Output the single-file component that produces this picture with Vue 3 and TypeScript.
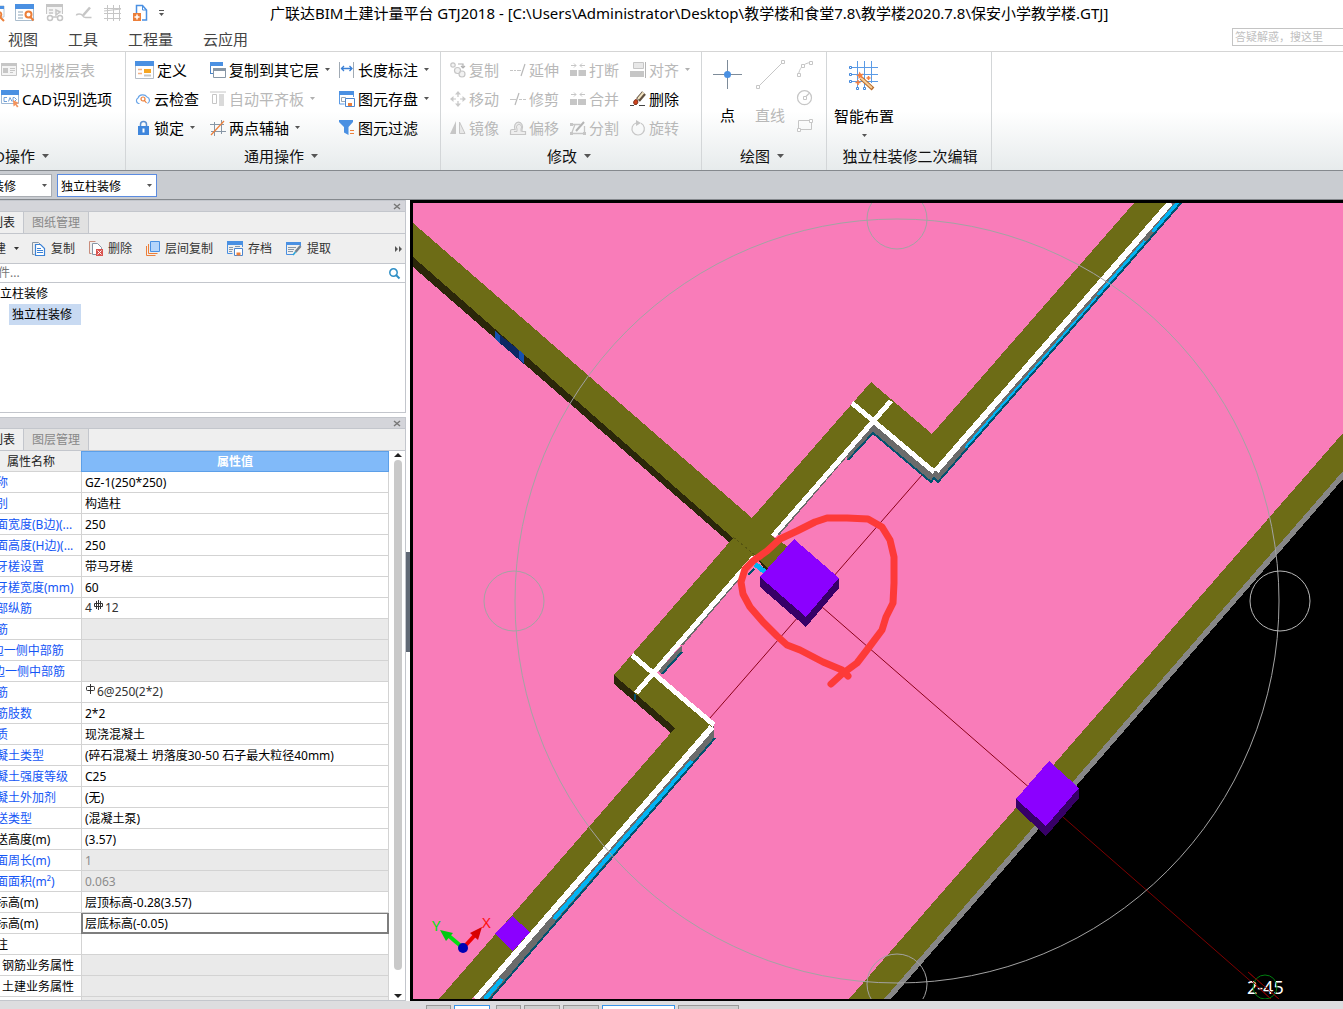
<script setup lang="ts">
import { h, ref, type FunctionalComponent } from 'vue'

// [path, fill, stroke, stroke width]
type Shape = [string, string, string?, number?]
interface Drawing { w: number; h: number; shapes: Shape[] }

const N = 'none'
const G = '#c6c6c6'
const B = '#4a90e2'
const S = '#8796a5'
const O = '#ec7f3a'

const drawings: Record<string, Drawing> = {
  caret: { w: 5, h: 3, shapes: [['M0 0h5l-2.5 3z', 'currentColor']] },
  caretWide: { w: 7, h: 4, shapes: [['M0 0h7L3.5 4z', 'currentColor']] },
  moreDown: { w: 5, h: 6, shapes: [['M0 0h5v1H0z', '#555'], ['M0 3h5L2.5 6z', '#555']] },
  close: { w: 6, h: 5, shapes: [['M0 0l6 5M6 0L0 5', N, '#777', 1.5]] },
  chevrons: { w: 8, h: 6, shapes: [['M0 0l3 3-3 3zM4 0l3 3-3 3z', '#555']] },
  search: { w: 11, h: 11, shapes: [['M4.500 .8a3.700 3.700 0 1 1 0 7.400a3.700 3.700 0 0 1 0-7.400z', N, '#2f8fc6', 1.5], ['M7 7l3.500 3.500', N, '#2f8fc6', 2]] },
  quickEdge: { w: 5, h: 18, shapes: [['M0 2h4v11H0', N, '#b9c6d2', 1], ['M0 2h4v3H0z', B], ['M0 13l4 4M0 8a3 3 0 0 1 0 5', N, O, 2]] },
  quickSearch: { w: 19, h: 18, shapes: [['M.5 1.500h18v15h-18z', '#fff', '#a9bccd', 1], ['M0 0h19v5H0z', B], ['M3 8h5M3 11h5M3 14h5', N, '#b4c3d0', 1.5], ['M13.500 7.500a3 3 0 1 1 0 6a3 3 0 0 1 0-6zM15.500 13l3 3.500', '#fff', O, 2]] },
  quickGlasses: { w: 18, h: 18, shapes: [['M.5 10V.5h16V10', '#f5f5f5', G, 1], ['M0 0h17v3H0z', G], ['M3 6h4M3 9h4M10 6l4 2-4 3z', N, G, 1.500], ['M4 11.500a2.500 2.500 0 1 1 0 5a2.500 2.500 0 0 1 0-5zM14 11.500a2.500 2.500 0 1 1 0 5a2.500 2.500 0 0 1 0-5zM6.500 13h5', '#fff', G, 1.500]] },
  quickPen: { w: 16, h: 12, shapes: [['M.5 8.500c0-2 5-2 6 0s2 2 3 2h6', N, G, 1.500], ['M14 .5L7 8.500', N, G, 2.500]] },
  quickGrid: { w: 17, h: 16, shapes: [['M3.500 0v16M9.500 0v16M15.500 0v16M0 3.500h17M0 8.500h17M0 13.500h17M0 6l17-2', N, G, 1]] },
  quickNew: { w: 14, h: 16, shapes: [['M3.500 8V.5h6L13.500 5v10H9', '#fff', B, 1.500], ['M9.500 1v4H13', N, B, 1], ['M0 8h8v8H0z', O], ['M4 9.500v5M1.500 12h5', N, '#fff', 1.500]] },
  floorSheet: { w: 16, h: 16, shapes: [['M.5 2.500h15v11H.5z', '#f4f4f4', G, 1], ['M0 1h16v3H0z', G], ['M2 6h5v5H2z', G], ['M9 6.500h5M9 8.500h5M9 10.500h3', N, G, 1]] },
  cad: { w: 18, h: 18, shapes: [['M.5 1.500h17v12H.5z', '#fff', '#9db7d4', 1], ['M0 0h18v5H0z', B], ['M6 7.500H3v4h3M7.500 11.500l1.500-4 2 4M12 7.500v4h1.500l2-2-2-2z', N, '#6f9fd8', 1], ['M12 10l6 3-2.500 1 2 2.500-1.500 1-1.500-2.500-2 1.500z', '#f3935c']] },
  define: { w: 19, h: 18, shapes: [['M.5.5h18v17H.5z', '#fff', '#b5bdc6', 1], ['M0 0h19v5H0z', B], ['M9 8h7v4H9z', '#f6a623'], ['M3 8.500h4M3 12.500h4', N, '#f4b183', 1.500], ['M9 14.500h7', N, G, 2]] },
  cloud: { w: 16, h: 12, shapes: [['M4.500 10.500H3.500a3 3 0 0 1-.5-5.500A5 4.500 0 0 1 12 4a3.500 3.500 0 0 1 .5 6.500', N, '#6aa5e8', 1.200], ['M8 4a2 2 0 1 1 0 4a2 2 0 0 1 0-4zM9.500 7.500l2 2.500', N, O, 1.200]] },
  lock: { w: 11, h: 14, shapes: [['M2.500 7V3.500a3 3 0 0 1 6 0V7', N, '#5b8fd0', 1.500], ['M0 5h11v9H0z', '#3f86dc'], ['M4.500 7.500h2v4h-2z', '#fff']] },
  copyFloor: { w: 16, h: 16, shapes: [['M.5 11.500V1.500h12V4', '#fff', '#4a84c8', 1], ['M0 0h13v4H0z', B], ['M3.500 6.500h12v9h-12z', '#fff', S, 1], ['M3 6h13v3H3z', S], ['M0 11.500h3', N, '#4a84c8', 1]] },
  alignSlab: { w: 16, h: 16, shapes: [['M0 1h16', N, G, 1], ['M2.500 3.500h4v9h-4z', '#fff', G, 1], ['M9 3h5v12H9z', '#dadada']] },
  auxAxis: { w: 16, h: 16, shapes: [['M4.500 2v14M11.500 0v14M0 4.500h14M1 11.500h15', N, S, 1], ['M1 15L14 1', N, O, 1.200]] },
  length: { w: 16, h: 16, shapes: [['M.5 0v16M14.500 0v16', N, '#a0aab4', 1], ['M2 6.500h11M5 4L2.500 6.500 5 9M10.500 4L13 6.500 10.500 9', N, '#3a7fd5', 1.300]] },
  store: { w: 16, h: 16, shapes: [['M.5 1v12h5M14.500 1v5', N, '#5b9be6', 1], ['M0 0h15v4H0z', B], ['M2.500 6.500h4v4h-4z', N, '#9aa7b3', 1], ['M6.500 7.500h9v8h-9z', '#fff', '#4c86cf', 1], ['M9 12h4v3H9z', O]] },
  filter: { w: 16, h: 16, shapes: [['M0 0h14v2L9.500 7v8L5 12.500V7L0 2z', '#4a90e2'], ['M11 10.500h4M11 13.500h4', N, O, 1]] },
  copy: { w: 16, h: 16, shapes: [['M3 .8a2.200 2.200 0 1 1 0 4.400a2.200 2.200 0 0 1 0-4.400zM7.500 5.500a3 3 0 1 1 0 6a3 3 0 0 1 0-6zM12 9a3 3 0 1 1 0 6a3 3 0 0 1 0-6z', '#f2f2f2', G, 1.200], ['M8 2h5v4M11 4l2 2 2-2', N, '#b0b0b0', 1.200]] },
  extend: { w: 16, h: 12, shapes: [['M0 6.500h3M4 6.500h2M7 6.500h4', N, G, 1], ['M15 0l-4 12', N, '#b8b8b8', 1.200]] },
  breakUp: { w: 16, h: 13, shapes: [['M0 7h7v6H0zM8.500 7H16v6H8.500z', G], ['M1 2.500h5M4 .5l2 2-2 2M15 2.500h-5M12 .5l-2 2 2 2', N, G, 1]] },
  merge: { w: 16, h: 13, shapes: [['M0 7h7v6H0zM8 7h8v6H8z', G], ['M1 2.500h5M4 .5l2 2-2 2M15 2.500h-5M12 .5l-2 2 2 2', N, G, 1]] },
  align: { w: 16, h: 16, shapes: [['M3.500.5h10v6h-10z', '#e8e8e8', G, 1], ['M0 9h14v6H0z', G], ['M15.500 0v16', N, '#b5b5b5', 1]] },
  move: { w: 16, h: 16, shapes: [['M8 2v12M2 8h12', N, G, 1.200], ['M5 3.500L8 0l3 3.500zM5 12.500L8 16l3-3.500zM3.500 5L0 8l3.500 3zM12.500 5L16 8l-3.500 3z', '#c9c9c9'], ['M6 6h4v4H6z', '#fff']] },
  trim: { w: 16, h: 12, shapes: [['M0 6.500h6M9 6.500h3M13 6.500h3', N, G, 1], ['M9 0L5 12', N, '#b8b8b8', 1.200]] },
  erase: { w: 16, h: 16, shapes: [['M0 14.500h4M9 14.500h6', N, '#444', 1], ['M14 2L8 9', N, '#5f4f3e', 5], ['M13.500 1.500L8 8', N, '#f2e3c2', 2], ['M6 8.500a2.500 2.500 0 1 1-1.500 5a3 3 0 0 1 1.500-5z', '#d0431c', '#7a2d18', 1]] },
  mirror: { w: 16, h: 16, shapes: [['M6 1v13H0z', G], ['M9.500 2v11.500H15z', '#e8e8e8', G, 1]] },
  offset: { w: 16, h: 16, shapes: [['M.5 14.500h15v-3h-3.500V9.500a4 5 0 1 0-7 0H2a1.500 1.500 0 0 0-1.500 1.500z', '#eee', G, 1.200], ['M4 11.500h3V9a2.500 3 0 1 1 4 0v2.500', N, G, 1]] },
  split: { w: 16, h: 14, shapes: [['M1.500 3.500h9M14.500 5v7.500h-13L5 3.500', N, G, 1.300], ['M0 2h3v3H0zM0 11h3v3H0zM13 11h3v3h-3z', G], ['M14 1L6 10', N, '#b5b5b5', 2]] },
  rotate: { w: 16, h: 16, shapes: [['M6 3A6.200 6.200 0 1 0 11 3.300', N, G, 1.200], ['M6 0l5 3-5 3z', G]] },
  point: { w: 29, h: 29, shapes: [['M14.500 0v29M0 14.500h29', N, '#7d8b99', 1], ['M14.500 11a3.500 3.500 0 1 1 0 7a3.500 3.500 0 0 1 0-7z', B]] },
  line: { w: 29, h: 29, shapes: [['M2 27L27 2', N, G, 1], ['M.5 25.500h3v3h-3zM25.500.5h3v3h-3z', '#fff', G, 1]] },
  arc: { w: 16, h: 16, shapes: [['M1.500 14C2 8 6 2 14 1.500', N, G, 1], ['M.5 12.500h3v3h-3zM4.500 3.500h3v3h-3zM12.500.5h3v3h-3z', '#fff', G, 1]] },
  circle: { w: 16, h: 16, shapes: [['M7.500.7a7 7 0 1 1 0 14a7 7 0 0 1 0-14zM8 7.500l4-4', N, G, 1.200], ['M6.500 6.500h3v3h-3z', '#fff', G, 1]] },
  rect: { w: 16, h: 13, shapes: [['M1.500 1.500h13v9h-13z', N, G, 1], ['M.5 9.500h3v3h-3zM12.500.5h3v3h-3z', '#fff', G, 1]] },
  smart: { w: 30, h: 30, shapes: [['M8.500 0v26M15.500 0v26M22.500 0v22M2 6.500h27M2 13.500h27M2 20.500h27', N, '#5b9be6', 1], ['M.5 5.500h2v2h-2zM.5 12.500h2v2h-2zM.5 19.500h2v2h-2zM7.500 26.500h2v2h-2zM14.500 26.500h2v2h-2z', '#fff', '#3f86dc', 1], ['M12 17l12 11', N, '#b86b2a', 4], ['M12 17l11 10', N, '#f7cf9b', 2], ['M10.500 10.500l1.500 2.500 2.500-.5-1.500 2.500 1 2.500-2.500-1-2 1.500v-2.500L7 14l2.500-.5z', '#f5803e'], ['M9 19v5M6.500 21.500h5M19.500 15v4M17.500 17h4', N, '#f5803e', 1.500]] },
  panelCopy: { w: 14, h: 14, shapes: [['M2.500 12.500h-2V.5h6l3 3', N, S, 1], ['M3.500 2.500h5l4 4v7h-9z', '#fff', '#3b82d6', 1.200], ['M5 6.500h4M5 8.500h6M5 10.500h6', N, '#3b82d6', 1]] },
  panelDelete: { w: 14, h: 15, shapes: [['M2.500 12.500h-2V.5h6', N, '#c98d7c', 1], ['M7 13.500H3.500v-11h5l4 4V8', '#fff', S, 1], ['M7 8h7v7H7z', '#d9534f'], ['M8.500 9.500l4 4M12.500 9.500l-4 4', N, '#fff', 1]] },
  panelFloors: { w: 14, h: 15, shapes: [['M.5 5v9.500h9', N, O, 1], ['M2.500 3v9.500h9', N, O, 1], ['M4.500.5h9v10h-9z', '#b5d5fb', '#4a90e2', 1]] },
  panelSave: { w: 16, h: 16, shapes: [['M.5 1v11.500h5M15.500 1v5', N, '#4a90e2', 1], ['M0 0h16v4H0z', B], ['M2 6.500h4M2 8.500h4M2 10.500h3M8 5.500h5', N, S, 1], ['M7.500 7.500h8v7h-8z', '#fff', '#4c86cf', 1], ['M9.500 11.500h4v3h-4z', O]] },
  panelExtract: { w: 16, h: 14, shapes: [['M.5 1v11.500h7M14.500 1v3', N, '#4a90e2', 1], ['M0 0h15v3H0z', B], ['M2 5.500h8M2 7.500h6M2 9.500h5', N, S, 1], ['M14.500 4L9.500 10', N, '#75828e', 2.500], ['M9.500 10L7 13', N, '#27a5d8', 1.500]] },
  barThree: { w: 11, h: 10, shapes: [['M5.500 0v10M3.500 1v8M7.500 1v8', N, '#333', 1], ['M1.500 3.500h8v3h-8z', N, '#333', 1]] },
  barOne: { w: 11, h: 10, shapes: [['M5.500 0v10', N, '#333', 1], ['M1.500 3.500a1 1 0 0 1 1-1h6a1 1 0 0 1 1 1v2a1 1 0 0 1-1 1h-6a1 1 0 0 1-1-1z', N, '#333', 1]] },
}

const Glyph: FunctionalComponent<{ name: string }> = (props) => {
  const g = drawings[props.name]
  return h(
    'svg',
    { width: g.w, height: g.h, viewBox: `0 0 ${g.w} ${g.h}`, 'aria-hidden': 'true', style: 'flex:none;display:block;overflow:visible' },
    g.shapes.map(([d, fill, stroke, width]) => h('path', { d, fill, stroke: stroke ?? N, 'stroke-width': width ?? 0 })),
  )
}
Glyph.props = ['name']

interface Command { icon: string; text: string; off?: boolean; menu?: boolean }

const quick = ['quickEdge', 'quickSearch', 'quickGlasses', 'quickPen', 'quickGrid', 'quickNew', 'moreDown']
const menus = ['视图', '工具', '工程量', '云应用']

const cadCommands: Command[] = [
  { icon: 'floorSheet', text: '识别楼层表', off: true },
  { icon: 'cad', text: 'CAD识别选项' },
]
const commonCommands: Command[] = [
  { icon: 'define', text: '定义' },
  { icon: 'copyFloor', text: '复制到其它层', menu: true },
  { icon: 'length', text: '长度标注', menu: true },
  { icon: 'cloud', text: '云检查' },
  { icon: 'alignSlab', text: '自动平齐板', off: true, menu: true },
  { icon: 'store', text: '图元存盘', menu: true },
  { icon: 'lock', text: '锁定', menu: true },
  { icon: 'auxAxis', text: '两点辅轴', menu: true },
  { icon: 'filter', text: '图元过滤' },
]
const editCommands: Command[] = [
  { icon: 'copy', text: '复制', off: true },
  { icon: 'extend', text: '延伸', off: true },
  { icon: 'breakUp', text: '打断', off: true },
  { icon: 'align', text: '对齐', off: true, menu: true },
  { icon: 'move', text: '移动', off: true },
  { icon: 'trim', text: '修剪', off: true },
  { icon: 'merge', text: '合并', off: true },
  { icon: 'erase', text: '删除' },
  { icon: 'mirror', text: '镜像', off: true },
  { icon: 'offset', text: '偏移', off: true },
  { icon: 'split', text: '分割', off: true },
  { icon: 'rotate', text: '旋转', off: true },
]
const commandBlocks = [
  { key: 'recognise', label: 'CAD操作', commands: cadCommands },
  { key: 'common', label: '通用操作', commands: commonCommands },
  { key: 'edit', label: '修改', commands: editCommands },
]

const panelTools = [
  { icon: 'panelCopy', text: '复制' },
  { icon: 'panelDelete', text: '删除' },
  { icon: 'panelFloors', text: '层间复制' },
  { icon: 'panelSave', text: '存档' },
  { icon: 'panelExtract', text: '提取' },
]

interface Property { name: string; value?: string; pre?: string; bar?: string; tone?: string; locked?: boolean; active?: boolean }

const properties: Property[] = [
  { name: '名称', value: 'GZ-1(250*250)' },
  { name: '类别', value: '构造柱' },
  { name: '截面宽度(B边)(...', value: '250' },
  { name: '截面高度(H边)(...', value: '250' },
  { name: '马牙槎设置', value: '带马牙槎' },
  { name: '马牙槎宽度(mm)', value: '60' },
  { name: '全部纵筋', pre: '4', bar: 'barThree', value: '12' },
  { name: '角筋', locked: true },
  { name: 'B边一侧中部筋', locked: true },
  { name: 'H边一侧中部筋', locked: true },
  { name: '箍筋', bar: 'barOne', value: '6@250(2*2)' },
  { name: '箍筋肢数', value: '2*2' },
  { name: '材质', value: '现浇混凝土' },
  { name: '混凝土类型', value: '(碎石混凝土 坍落度30-50 石子最大粒径40mm)' },
  { name: '混凝土强度等级', value: 'C25' },
  { name: '混凝土外加剂', value: '(无)' },
  { name: '泵送类型', value: '(混凝土泵)' },
  { name: '泵送高度(m)', value: '(3.57)', tone: 'plain' },
  { name: '截面周长(m)', value: '1', locked: true },
  { name: '截面面积(m²)', value: '0.063', locked: true },
  { name: '顶标高(m)', value: '层顶标高-0.28(3.57)', tone: 'plain' },
  { name: '底标高(m)', value: '层底标高(-0.05)', tone: 'plain', active: true },
  { name: '备注', tone: 'plain' },
  { name: '钢筋业务属性', tone: 'plain branch', locked: true },
  { name: '土建业务属性', tone: 'plain branch', locked: true },
  { name: '', tone: 'plain', locked: true },
]

const category = ref('装修')
const element = ref('独立柱装修')
const keyword = ref('')
const help = ref('')
</script>

<template>
  <div class="app">
    <header class="top">
      <div class="title-row">
        <div class="quick">
          <button v-for="q in quick" :key="q" type="button" :aria-label="q"><Glyph :name="q" /></button>
        </div>
        <h1>广联达BIM土建计量平台 GTJ2018 - [C:\Users\Administrator\Desktop\教学楼和食堂7.8\教学楼2020.7.8\保安小学教学楼.GTJ]</h1>
      </div>
      <div class="menu-row">
        <nav>
          <button v-for="m in menus" :key="m" type="button">{{ m }}</button>
        </nav>
        <input v-model="help" class="help" type="text" placeholder="答疑解惑，搜这里" aria-label="答疑解惑" />
      </div>
    </header>

    <div class="ribbon">
      <section v-for="b in commandBlocks" :key="b.key" :class="['block', b.key]">
        <div class="commands">
          <button v-for="c in b.commands" :key="c.text" type="button" class="command" :disabled="c.off">
            <span class="slot"><Glyph :name="c.icon" /></span>
            <span>{{ c.text }}</span>
            <Glyph v-if="c.menu" name="caret" class="drop" />
          </button>
        </div>
        <button type="button" class="block-label">{{ b.label }}<Glyph name="caretWide" /></button>
      </section>
      <section class="block draw">
        <div class="large-row">
          <button type="button" class="large"><Glyph name="point" /><span>点</span></button>
          <button type="button" class="large" disabled><Glyph name="line" /><span>直线</span></button>
          <div class="shapes">
            <button type="button" disabled aria-label="弧"><Glyph name="arc" /></button>
            <button type="button" disabled aria-label="圆"><Glyph name="circle" /></button>
            <button type="button" disabled aria-label="矩形"><Glyph name="rect" /></button>
          </div>
        </div>
        <button type="button" class="block-label">绘图<Glyph name="caretWide" /></button>
      </section>
      <section class="block second">
        <div class="large-row">
          <button type="button" class="large"><Glyph name="smart" /><span>智能布置</span><Glyph name="caret" /></button>
        </div>
        <div class="block-label">独立柱装修二次编辑</div>
      </section>
    </div>

    <div class="filters">
      <label class="pick">
        <select v-model="category" aria-label="构件分类"><option>装修</option></select>
        <Glyph name="caret" />
      </label>
      <label class="pick focused">
        <select v-model="element" aria-label="构件类型"><option>独立柱装修</option></select>
        <Glyph name="caret" />
      </label>
    </div>

    <main class="work">
      <aside class="dock">
        <section class="panel">
          <div class="panel-title"><button type="button" aria-label="关闭"><Glyph name="close" /></button></div>
          <div class="tabs">
            <button type="button" class="on">构件列表</button>
            <button type="button">图纸管理</button>
          </div>
          <div class="tools">
            <button type="button" class="create">新建<Glyph name="caret" /></button>
            <button v-for="t in panelTools" :key="t.text" type="button"><Glyph :name="t.icon" />{{ t.text }}</button>
            <button type="button" class="more" aria-label="更多"><Glyph name="chevrons" /></button>
          </div>
          <label class="find">
            <input v-model="keyword" type="text" placeholder="搜索构件..." aria-label="搜索构件" />
            <Glyph name="search" />
          </label>
          <ul class="tree">
            <li>独立柱装修</li>
            <li class="child"><span>独立柱装修</span></li>
          </ul>
        </section>

        <section class="panel grow">
          <div class="panel-title"><button type="button" aria-label="关闭"><Glyph name="close" /></button></div>
          <div class="tabs">
            <button type="button" class="on">属性列表</button>
            <button type="button">图层管理</button>
          </div>
          <div class="sheet">
            <table>
              <thead><tr><th class="key">属性名称</th><th class="val">属性值</th></tr></thead>
              <tbody>
                <tr v-for="(p, i) in properties" :key="i">
                  <th scope="row" :class="p.tone">{{ p.name }}</th>
                  <td :class="{ locked: p.locked, active: p.active }">
                    <div v-if="p.bar" class="steel">{{ p.pre }}<Glyph :name="p.bar" />{{ p.value }}</div>
                    <template v-else>{{ p.value }}</template>
                  </td>
                </tr>
              </tbody>
            </table>
            <div class="scroll"><i class="up"></i><i class="thumb"></i><i class="down"></i></div>
          </div>
        </section>
      </aside>

      <div class="splitter"><button type="button" aria-label="收起"></button></div>

      <div class="view">
        <svg viewBox="413 203 930 796" preserveAspectRatio="xMinYMin slice" role="img" aria-label="三维视图">
          <g shape-rendering="crispEdges">
            <path fill="#f97cb9" d="M413 203h930v796H413z" />
            <path fill="#000" d="M890 999L1343 479v520z" />
            <path fill="#878787" d="M882 999L1343 470v9L891 999z" />
            <path fill="#6d6c16" d="M849 999L1343 433v38L884 999z" />
          </g>
          <g fill="none" stroke="#8b0018">
            <path d="M922 475L710 718M806 593L1047 803" />
            <path stroke="#7d0000" d="M1047 803L1271 999M1248 972L1279 999" />
          </g>
          <g shape-rendering="crispEdges">
            <path fill="#2b270a" d="M413 257v10L730 543l6-6zM614 675v9l57 49 6-6zM756 556l16 10-6 6z" />
            <path fill="#0b2864" d="M495 331v8l29 25v-10z" />
            <path fill="#1650ae" d="M495 331v8l5 4v-8zM519 349v10l5 5v-10z" />
            <path fill="#6b6b6b" d="M845 453l3 7 25-27 58 49 3-4 4 4 243-279h-9L934 470l-61-50zM658 671l4 3 20-22v-7zM714 724v14L491 999h-15z" />
            <path fill="none" stroke="#6b6b6b" d="M848 454L778 535M752 563L682 645" stroke-width="2" />
            <path fill="none" stroke="#00b4f5" stroke-width="4" d="M1178 203L1153 232M1098 297L966 448M485 999l17-20M554 919L692 761" />
            <path fill="none" stroke="#00b4f5" stroke-width="5" d="M755 564l10 8" />
            <path fill="none" stroke="#00b4f5" stroke-width="3" d="M1145 241L1098 295" />
            <path fill="none" stroke="#04526f" stroke-width="2" d="M1181 203L938 482l-4-4-3 4-58-49-25 27M715 738L490 999M682 652l-20 22M748 575l6-6M635 694v6" />
            <path fill="#6d6c16" d="M413 223L752 518 871 382l61 52 202-231h36L934 471l-61-51-101 116 21 14-26 18-13-13-101 116 61 53-242 275h-33L675 728l-61-53 119-137L413 257z" />
            <path fill="none" stroke="#565511" stroke-dasharray="3 2" d="M733 537l22 18" />
          </g>
          <g fill="none" stroke="#fff" stroke-width="5" shape-rendering="crispEdges">
            <path d="M632 655l82 70M636 693l118-136M773 536L891 401M852 403l82 69" />
            <path stroke-width="6" d="M476 999L712 727M936 471l234-268" />
          </g>
          <g shape-rendering="crispEdges">
            <path fill="#370067" d="M760 577v10l46 40 33-39v-10l-33 30zM1016 799v9l30 28 33-38v-10l-33 30z" />
            <path fill="#8b00ff" d="M794 539l45 39-33 39-46-40zM1049 761l30 27-33 38-30-27zM512 916l18 16-17 19-18-17z" />
          </g>
          <g fill="none" stroke="#a3a3a3">
            <circle cx="897" cy="601" r="382" />
            <circle cx="897" cy="219" r="30" />
            <circle cx="897" cy="984" r="30" />
            <circle cx="514" cy="601" r="30" />
            <circle cx="1280" cy="601" r="30" stroke="#b8b8b8" />
          </g>
          <path fill="none" stroke="#fd3a38" stroke-width="7" stroke-linecap="round" stroke-linejoin="round"
            d="M831 684l11-10 15-11 13-17 12-16 4-13 7-14 1-20v-26l-4-17-8-13-14-8-21-1h-20l-12 4-18 9-17 8-13 12-14 10-8 8-4 13 2 12 7 13 13 15 14 14 10 9 13 5 23 12 19 8 6 6" />
          <path stroke="#00e010" stroke-width="4" d="M462 947l-13-11" />
          <path fill="#00c810" d="M440 930l13 3-7 8z" />
          <path stroke="#f00000" stroke-width="4" d="M465 946l10-11" />
          <path fill="#d80000" d="M482 927l-4 13-8-7z" />
          <circle cx="463" cy="948" r="5" fill="#0000b4" />
          <text x="432" y="931" fill="#00e010" class="axis">Y</text>
          <text x="482" y="928" fill="#ff1010" class="axis">X</text>
          <text x="1247" y="994" fill="#fff" class="mark">2-45</text>
          <circle cx="1265" cy="987" r="12" fill="none" stroke="#007d10" />
          <path stroke="#7d0000" d="M1252 981l19 18M1248 972l31 27" />
        </svg>
      </div>
    </main>

    <footer class="status">
      <span class="w25"></span><span class="w36 lit"></span><span class="w25 apart"></span><span class="w36"></span><span class="w36"></span><span class="w73 lit"></span><span class="w61"></span>
    </footer>
  </div>
</template>

<style>
body { margin: 0; }
</style>

<style scoped>
.app { display: flex; flex-direction: column; height: 100vh; overflow: hidden; background: #fff; color: #000; font: 12px/20px "Noto Sans", "Noto Sans CJK SC", sans-serif; }
.app * { box-sizing: border-box; }
button, input, select { margin: 0; padding: 0; border: 0; background: none; color: inherit; font: inherit; }
button { display: flex; align-items: center; white-space: nowrap; }

.top { flex: none; border-bottom: 1px solid #d5d5d5; font-size: 15px; }
.title-row { display: flex; align-items: center; height: 26px; }
.quick { display: flex; align-items: center; gap: 12px; width: 270px; flex: none; }
.quick button:first-child { margin-right: -2px; }
h1 { margin: 0; font-size: 15px; font-weight: 400; line-height: 26px; white-space: nowrap; }
.menu-row { display: flex; justify-content: space-between; align-items: center; height: 25px; }
nav { display: flex; gap: 30px; padding-left: 8px; color: #444; }
.help { width: 111px; height: 18px; margin-bottom: 3px; padding: 0 2px; border: 1px solid #c4c4c4; border-right: 0; font-size: 11px; }
.help::placeholder { color: #c0c0c0; opacity: 1; }

.ribbon { display: flex; flex: none; height: 119px; margin-left: -101px; border-bottom: 1px solid #85898e; background: linear-gradient(#fff 50%, #e7ebec); font-size: 15px; }
.block { display: flex; flex-direction: column; padding-top: 3px; border-right: 1px solid #d3d6d8; }
.commands { display: grid; grid-auto-rows: 29px; height: 87px; }
.command { gap: 3px; }
.command:disabled, .large:disabled { color: #b8b8b8; }
.slot { display: flex; justify-content: center; min-width: 16px; }
.drop { margin-left: 3px; color: #555; }
.command:disabled .drop { color: #b0b0b0; }
.recognise { width: 227px; }
.recognise .commands { padding-left: 102px; }
.common { width: 315px; }
.common .commands { grid-template-columns: 75px 129px auto; padding-left: 9px; }
.edit { width: 261px; }
.edit .commands { grid-template-columns: 60px 60px 60px auto; padding-left: 9px; }
.block-label { display: flex; align-items: center; justify-content: center; gap: 7px; height: 27px; width: 100%; padding-right: 4px; color: #111; }
.recognise .block-label { padding-right: 0; }
.block-label svg { color: #555; }
.draw { width: 125px; }
.large-row { display: flex; height: 87px; }
.large { flex-direction: column; gap: 16px; padding-top: 5px; line-height: 20px; }
.draw .large-row { gap: 13px; padding-left: 11px; }
.shapes { display: flex; flex-direction: column; gap: 13px; padding-top: 6px; margin-left: -1px; }
.second { width: 165px; }
.second .large-row { padding-left: 7px; }
.second .large { gap: 15px; padding-top: 6px; }
.second .large > svg:last-child { margin-top: -7px; color: #555; }
.second .block-label { height: 29px; padding: 0 0 0 2px; }

.filters { display: flex; flex: none; align-items: center; gap: 5px; height: 29px; margin-left: -12px; border-bottom: 1px solid #85898e; background: #c9ccd1; }
.pick { display: flex; align-items: center; height: 23px; width: 64px; padding-right: 4px; border: 1px solid #a9adb3; background: #fff; }
.pick select { flex: 1; min-width: 0; height: 21px; padding: 2px 0 0 3px; appearance: none; outline: 0; }
.pick svg { color: #555; }
.focused { width: 100px; border-color: #5b8be0; }

.work { display: flex; flex: 1; min-height: 0; }
.dock { display: flex; flex: none; flex-direction: column; gap: 4px; width: 450px; margin-left: -44px; }
.panel { display: flex; flex-direction: column; flex: none; border: 1px solid #c3c6cc; }
.grow { flex: 1; min-height: 0; }
.panel-title { display: flex; flex: none; align-items: center; justify-content: flex-end; height: 10px; padding-right: 5px; background: #d4d5da; }
.tabs { display: flex; flex: none; height: 23px; border: 1px solid #c3c6cc; border-width: 1px 0; background: #efefef; }
.tabs button { padding: 0 8px; border-right: 1px solid #c3c6cc; background: #e1e1e1; color: #888; }
.tabs .on { padding-left: 10px; background: #efefef; color: #222; }
.tools { display: flex; align-items: center; gap: 14px; height: 29px; padding-left: 25px; background: #efefef; color: #333; }
.tools button { gap: 5px; }
.tools .create { gap: 8px; margin-right: -1px; }
.tools .more { margin-left: auto; padding-right: 2px; }
.find { display: flex; align-items: center; height: 20px; padding: 0 5px; border: 1px solid #c3c6cc; border-width: 1px 0; }
.find input { flex: 1; min-width: 0; height: 18px; outline: 0; }
.find input::placeholder { color: #777; opacity: 1; }
.tree { height: 129px; margin: 0; padding: 0 0 0 31px; list-style: none; line-height: 21px; }
.tree .child { padding-left: 21px; }
.tree .child span { display: inline-block; width: 72px; padding-left: 3px; background: #c8daf2; }

.sheet { display: flex; flex: 1; min-height: 0; overflow: hidden; }
table { flex: none; width: 432px; height: 0; border-spacing: 0; table-layout: fixed; }
th, td { height: 21px; padding: 2px 0 0 3px; border-bottom: 1px solid #d3d3d3; overflow: hidden; text-align: left; font-weight: 400; line-height: 18px; white-space: nowrap; }
thead th { text-align: center; }
thead .key { width: 124px; padding-left: 24px; background: #efefef; color: #222; }
thead .val { width: 308px; padding: 0; border: 1px solid #5c9fe8; background: #81baf9; color: #fff; font-weight: 700; line-height: 19px; }
tbody th { padding-left: 27px; color: #1456f5; }
tbody .plain { color: #000; }
tbody .branch { padding-left: 45px; }
td { border-left: 1px solid #d3d3d3; border-right: 1px solid #d3d3d3; }
td.locked { background: #eaeaea; color: #8c8c8c; }
td.active { box-shadow: inset 0 0 0 1px #7e7e7e; border-color: #7e7e7e; }
.steel { display: flex; align-items: flex-start; gap: 1px; height: 18px; color: #333; line-height: 16px; }
.scroll { display: flex; flex: 1; flex-direction: column; align-items: center; padding: 2px 0 2px 2px; }
.up, .down { border: 4px solid transparent; border-top-width: 0; border-bottom: 4px solid #222; }
.down { border-top: 4px solid #222; border-bottom-width: 0; }
.thumb { flex: 1; width: 8px; margin: 3px 0 24px; border-radius: 4px; background: #c9c9c9; }

.splitter { display: flex; flex: none; align-items: center; width: 4px; padding-top: 2px; }
.splitter button { width: 4px; height: 100px; background: #606975; }
.view { flex: 1; min-width: 0; border: solid #000; border-width: 3px 0 2px 3px; }
.view svg { display: block; width: 100%; height: 100%; }
.axis { font: 15px "Noto Sans", sans-serif; }
.mark { font: 18px "Noto Sans", sans-serif; }

.status { display: flex; flex: none; gap: 3px; height: 8px; padding: 4px 0 0 426px; background: #dddddf; }
.status span { height: 4px; border: 1px solid #999; border-bottom: 0; background: #cfcfcf; }
.status .lit { border-color: #3b95ea; background: #fff; }
.status .apart { margin-left: 3px; }
.w25 { width: 25px; }
.w36 { width: 36px; }
.w73 { width: 73px; }
.w61 { width: 61px; }
</style>
